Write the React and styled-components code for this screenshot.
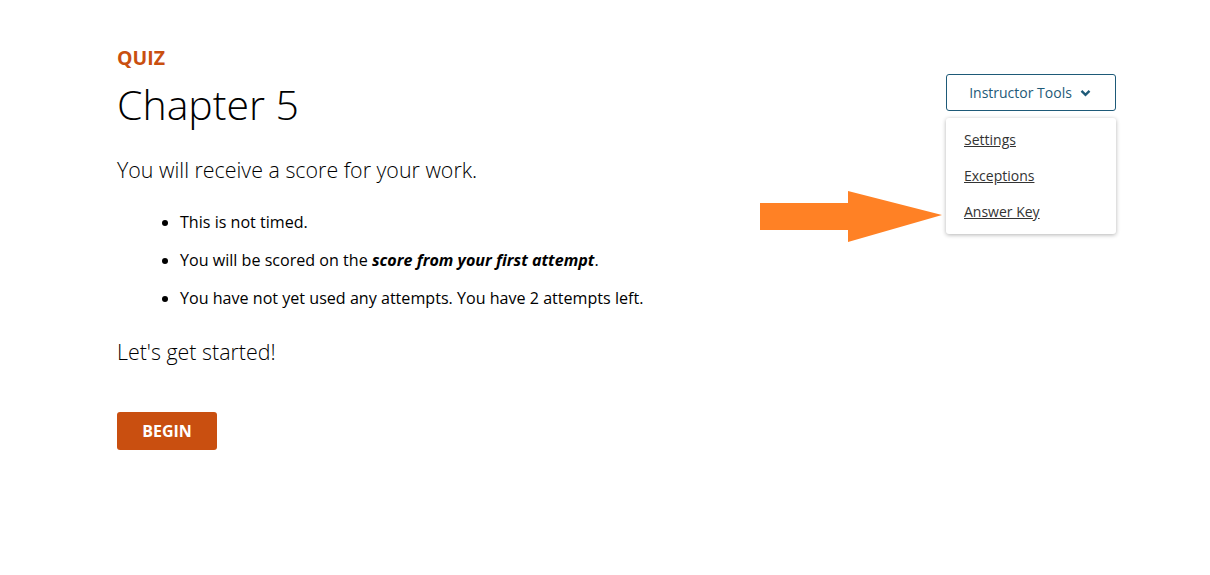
import React from "react";
import styled, { createGlobalStyle } from "styled-components";

const GlobalStyle = createGlobalStyle`
  body {
    margin: 0;
    background: #fff;
    font-family: 'Open Sans', 'Noto Sans', Arial, sans-serif;
    color: #000;
  }
`;

const Page = styled.div`
  width: 999px;
  margin: 0 0 0 117px;
  padding-top: 44px;
`;

const Header = styled.div`
  display: flex;
  justify-content: space-between;
  align-items: flex-start;
`;

const Eyebrow = styled.div`
  font-size: 19.5px;
  font-weight: 700;
  line-height: 28px;
  color: #c94f10;
`;

const Title = styled.h1`
  margin: 6px 0 0;
  font-size: 41px;
  font-weight: 300;
  line-height: 52px;
`;

const Lead = styled.p`
  margin: ${(p) => p.$top || 0}px 0 0;
  font-size: 21.4px;
  font-weight: 300;
  line-height: 30px;
`;

const List = styled.ul`
  margin: 26px 0 0;
  padding-left: 63px;
  font-size: 16.1px;
  line-height: 22px;
`;

const Item = styled.li`
  margin-bottom: 16px;
  em {
    font-weight: 700;
  }
`;

const PrimaryButton = styled.button`
  margin-top: 45px;
  width: 100px;
  height: 38px;
  border: none;
  border-radius: 3px;
  background: #c94f10;
  color: #fff;
  font-family: inherit;
  font-size: 16px;
  font-weight: 700;
`;

const Tools = styled.div`
  position: relative;
  margin-top: 30px;
`;

const ToolsButton = styled.button`
  display: flex;
  align-items: center;
  justify-content: center;
  gap: 8px;
  width: 170px;
  height: 37px;
  padding: 0 2px 0 0;
  background: #fff;
  border: 1px solid #1e5a78;
  border-radius: 3px;
  color: #1e5a78;
  font-family: inherit;
  font-size: 14px;
`;

const Menu = styled.div`
  position: absolute;
  top: 44px;
  left: 0;
  width: 170px;
  padding: 4px 0;
  background: #fff;
  border-radius: 3px;
  box-shadow: 0 1px 4px rgba(0, 0, 0, 0.3);
`;

const MenuLink = styled.a`
  display: block;
  padding: 7px 18px;
  font-size: 14px;
  line-height: 22px;
  color: #333;
  text-decoration: underline;
`;

const Pointer = styled.svg`
  position: absolute;
  top: 117px;
  left: -186px;
`;

function Chevron() {
  return (
    <svg width="11" height="8" viewBox="0 0 11 8">
      <path d="M1.5 1.8 L5.5 5.8 L9.5 1.8" fill="none" stroke="#1e5a78" strokeWidth="2.4" />
    </svg>
  );
}

export default function App() {
  return (
    <>
      <GlobalStyle />
      <Page>
        <Header>
          <div>
            <Eyebrow>QUIZ</Eyebrow>
            <Title>Chapter 5</Title>
          </div>
          <Tools>
            <ToolsButton>
              Instructor Tools <Chevron />
            </ToolsButton>
            <Menu>
              <MenuLink>Settings</MenuLink>
              <MenuLink>Exceptions</MenuLink>
              <MenuLink>Answer Key</MenuLink>
            </Menu>
            <Pointer width="184" height="52" viewBox="0 0 184 52">
              <polygon
                points="0,12 88,12 88,0 182,24 88,51 88,39 0,39"
                fill="#ff8125"
              />
            </Pointer>
          </Tools>
        </Header>
        <Lead $top={25}>You will receive a score for your work.</Lead>
        <List>
          <Item>This is not timed.</Item>
          <Item>
            You will be scored on the <em>score from your first attempt</em>.
          </Item>
          <Item>You have not yet used any attempts. You have 2 attempts left.</Item>
        </List>
        <Lead $top={28}>Let's get started!</Lead>
        <PrimaryButton>BEGIN</PrimaryButton>
      </Page>
    </>
  );
}
